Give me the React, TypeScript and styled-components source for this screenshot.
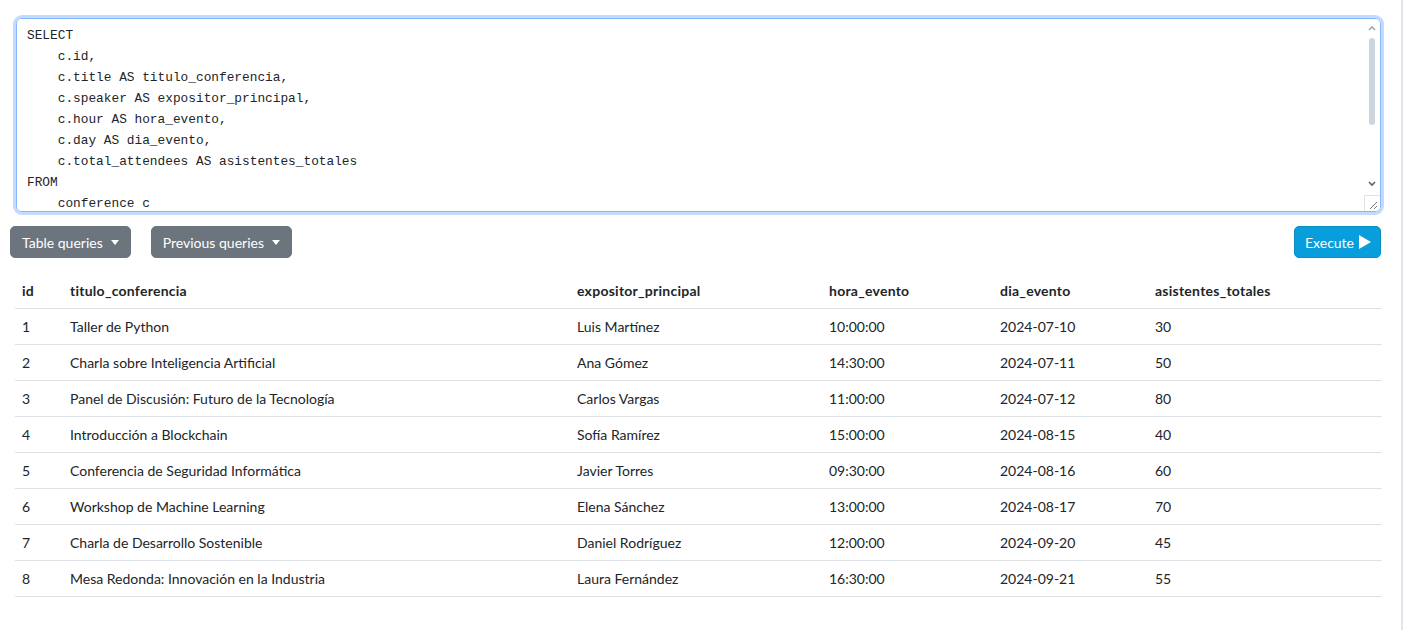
import styled, { createGlobalStyle } from 'styled-components'

type Row = {
  id: number
  titulo: string
  expositor: string
  hora: string
  dia: string
  asistentes: number
}

const QUERY = `SELECT
    c.id,
    c.title AS titulo_conferencia,
    c.speaker AS expositor_principal,
    c.hour AS hora_evento,
    c.day AS dia_evento,
    c.total_attendees AS asistentes_totales
FROM
    conference c
ORDER BY
    c.day, c.hour;`

const COLUMNS: { key: keyof Row; label: string; width: number }[] = [
  { key: 'id', label: 'id', width: 48 },
  { key: 'titulo', label: 'titulo_conferencia', width: 507 },
  { key: 'expositor', label: 'expositor_principal', width: 252 },
  { key: 'hora', label: 'hora_evento', width: 171 },
  { key: 'dia', label: 'dia_evento', width: 155 },
  { key: 'asistentes', label: 'asistentes_totales', width: 234 },
]

const ROWS: Row[] = [
  { id: 1, titulo: 'Taller de Python', expositor: 'Luis Martínez', hora: '10:00:00', dia: '2024-07-10', asistentes: 30 },
  { id: 2, titulo: 'Charla sobre Inteligencia Artificial', expositor: 'Ana Gómez', hora: '14:30:00', dia: '2024-07-11', asistentes: 50 },
  { id: 3, titulo: 'Panel de Discusión: Futuro de la Tecnología', expositor: 'Carlos Vargas', hora: '11:00:00', dia: '2024-07-12', asistentes: 80 },
  { id: 4, titulo: 'Introducción a Blockchain', expositor: 'Sofía Ramírez', hora: '15:00:00', dia: '2024-08-15', asistentes: 40 },
  { id: 5, titulo: 'Conferencia de Seguridad Informática', expositor: 'Javier Torres', hora: '09:30:00', dia: '2024-08-16', asistentes: 60 },
  { id: 6, titulo: 'Workshop de Machine Learning', expositor: 'Elena Sánchez', hora: '13:00:00', dia: '2024-08-17', asistentes: 70 },
  { id: 7, titulo: 'Charla de Desarrollo Sostenible', expositor: 'Daniel Rodríguez', hora: '12:00:00', dia: '2024-09-20', asistentes: 45 },
  { id: 8, titulo: 'Mesa Redonda: Innovación en la Industria', expositor: 'Laura Fernández', hora: '16:30:00', dia: '2024-09-21', asistentes: 55 },
]

const GlobalStyle = createGlobalStyle`
  html, body {
    margin: 0;
    padding: 0;
    background: #fff;
  }
  body {
    font-family: Lato, "Liberation Sans", sans-serif;
    color: #212529;
  }
`

const Page = styled.div`
  display: flex;
  width: 1404px;
  height: 630px;
  overflow: hidden;
`

const Main = styled.div`
  box-sizing: border-box;
  width: 1403px;
  border-right: 2px solid #dfe6ef;
  padding: 18px 20px 0 10px;
  display: flex;
  flex-direction: column;
`

const EditorWrap = styled.div`
  position: relative;
  margin-left: 6px;
  height: 194px;
`

const Editor = styled.textarea`
  box-sizing: border-box;
  display: block;
  width: 100%;
  height: 100%;
  padding: 6px 26px 6px 10px;
  border: 1px solid #86b7fe;
  border-radius: 6px;
  box-shadow: 0 0 0 3px rgba(13, 110, 253, 0.25);
  outline: none;
  font-family: "Liberation Mono", "DejaVu Sans Mono", monospace;
  font-size: 12.8px;
  line-height: 21px;
  color: #212529;
  background: #fff;
  resize: none;
  overflow-y: auto;
`

/* drawn scroll bar and resize grip, laid over the textarea */
const ScrollTrack = styled.div`
  position: absolute;
  top: 1px;
  right: 1px;
  bottom: 1px;
  width: 16px;
  pointer-events: none;
`

const ScrollThumb = styled.div`
  position: absolute;
  top: 19px;
  left: 5px;
  width: 6px;
  height: 87px;
  border-radius: 3px;
  background: #cdd6df;
`

const Chevron = styled.svg<{ $pos: 'up' | 'down' }>`
  position: absolute;
  left: 3px;
  ${(p) => (p.$pos === 'up' ? 'top: 6px;' : 'bottom: 24px;')}
`

const Grip = styled.div`
  position: absolute;
  right: 1px;
  bottom: 1px;
  width: 16px;
  height: 16px;
  box-sizing: border-box;
  border-left: 1px solid #e1e1e1;
  border-top: 1px solid #e1e1e1;
  border-bottom-right-radius: 5px;
  background: #fff;
  pointer-events: none;
`

const Toolbar = styled.div`
  display: flex;
  align-items: center;
  gap: 20px;
  margin-top: 14px;
`

const Spacer = styled.div`
  flex: 1;
`

const Button = styled.button<{ $variant: 'secondary' | 'info' }>`
  box-sizing: border-box;
  display: inline-flex;
  align-items: center;
  height: 32px;
  padding: ${(p) => (p.$variant === 'info' ? '0 8px 0 10px' : '0 11px')};
  border-radius: 5px;
  border: 1px solid ${(p) => (p.$variant === 'info' ? '#0a8dc2' : '#6c757d')};
  background: ${(p) => (p.$variant === 'info' ? '#089edb' : '#6c757d')};
  color: #fff;
  font-family: Lato, "Liberation Sans", sans-serif;
  font-size: 14px;
  cursor: pointer;
`

const Caret = styled.span`
  display: inline-block;
  margin-left: 8px;
  border-top: 5px solid #fff;
  border-left: 4.5px solid transparent;
  border-right: 4.5px solid transparent;
`

const Table = styled.table`
  margin-top: 15px;
  margin-left: 5px;
  width: calc(100% - 5px);
  border-collapse: collapse;
  table-layout: fixed;
  font-size: 14px;
`

const HeadCell = styled.th`
  text-align: left;
  font-weight: 700;
  letter-spacing: 0.25px;
  height: 35px;
  padding: 0 7px;
  border-bottom: 1px solid #dee2e6;
  color: #212529;
`

const Cell = styled.td`
  height: 35px;
  padding: 0 7px;
  border-bottom: 1px solid #dee2e6;
  color: #212529;
  white-space: nowrap;
`

function PlayIcon() {
  return (
    <svg width="14" height="16" viewBox="0 0 14 16" style={{ marginLeft: 4 }}>
      <path d="M1 1 L13 8 L1 15 Z" fill="#fff" />
    </svg>
  )
}

function App() {
  return (
    <Page>
      <GlobalStyle />
      <Main>
        <EditorWrap>
          <Editor defaultValue={QUERY} spellCheck={false} />
          <ScrollTrack>
            <Chevron $pos="up" width="10" height="7" viewBox="0 0 10 7">
              <path d="M2 5 L5 2 L8 5" fill="none" stroke="#a3a9ae" strokeWidth="1.6" />
            </Chevron>
            <ScrollThumb />
            <Chevron $pos="down" width="10" height="7" viewBox="0 0 10 7">
              <path d="M2 2 L5 5 L8 2" fill="none" stroke="#5d6268" strokeWidth="1.6" />
            </Chevron>
          </ScrollTrack>
          <Grip>
            <svg width="15" height="15" viewBox="0 0 15 15">
              <path d="M5 12 L12 5 M9 12 L12 9" stroke="#777" strokeWidth="1" />
            </svg>
          </Grip>
        </EditorWrap>
        <Toolbar>
          <Button type="button" $variant="secondary">
            Table queries
            <Caret />
          </Button>
          <Button type="button" $variant="secondary">
            Previous queries
            <Caret />
          </Button>
          <Spacer />
          <Button type="button" $variant="info">
            Execute
            <PlayIcon />
          </Button>
        </Toolbar>
        <Table>
          <colgroup>
            {COLUMNS.map((c) => (
              <col key={c.key} style={{ width: c.width }} />
            ))}
          </colgroup>
          <thead>
            <tr>
              {COLUMNS.map((c) => (
                <HeadCell key={c.key}>{c.label}</HeadCell>
              ))}
            </tr>
          </thead>
          <tbody>
            {ROWS.map((r) => (
              <tr key={r.id}>
                {COLUMNS.map((c) => (
                  <Cell key={c.key}>{r[c.key]}</Cell>
                ))}
              </tr>
            ))}
          </tbody>
        </Table>
      </Main>
    </Page>
  )
}

export default App
